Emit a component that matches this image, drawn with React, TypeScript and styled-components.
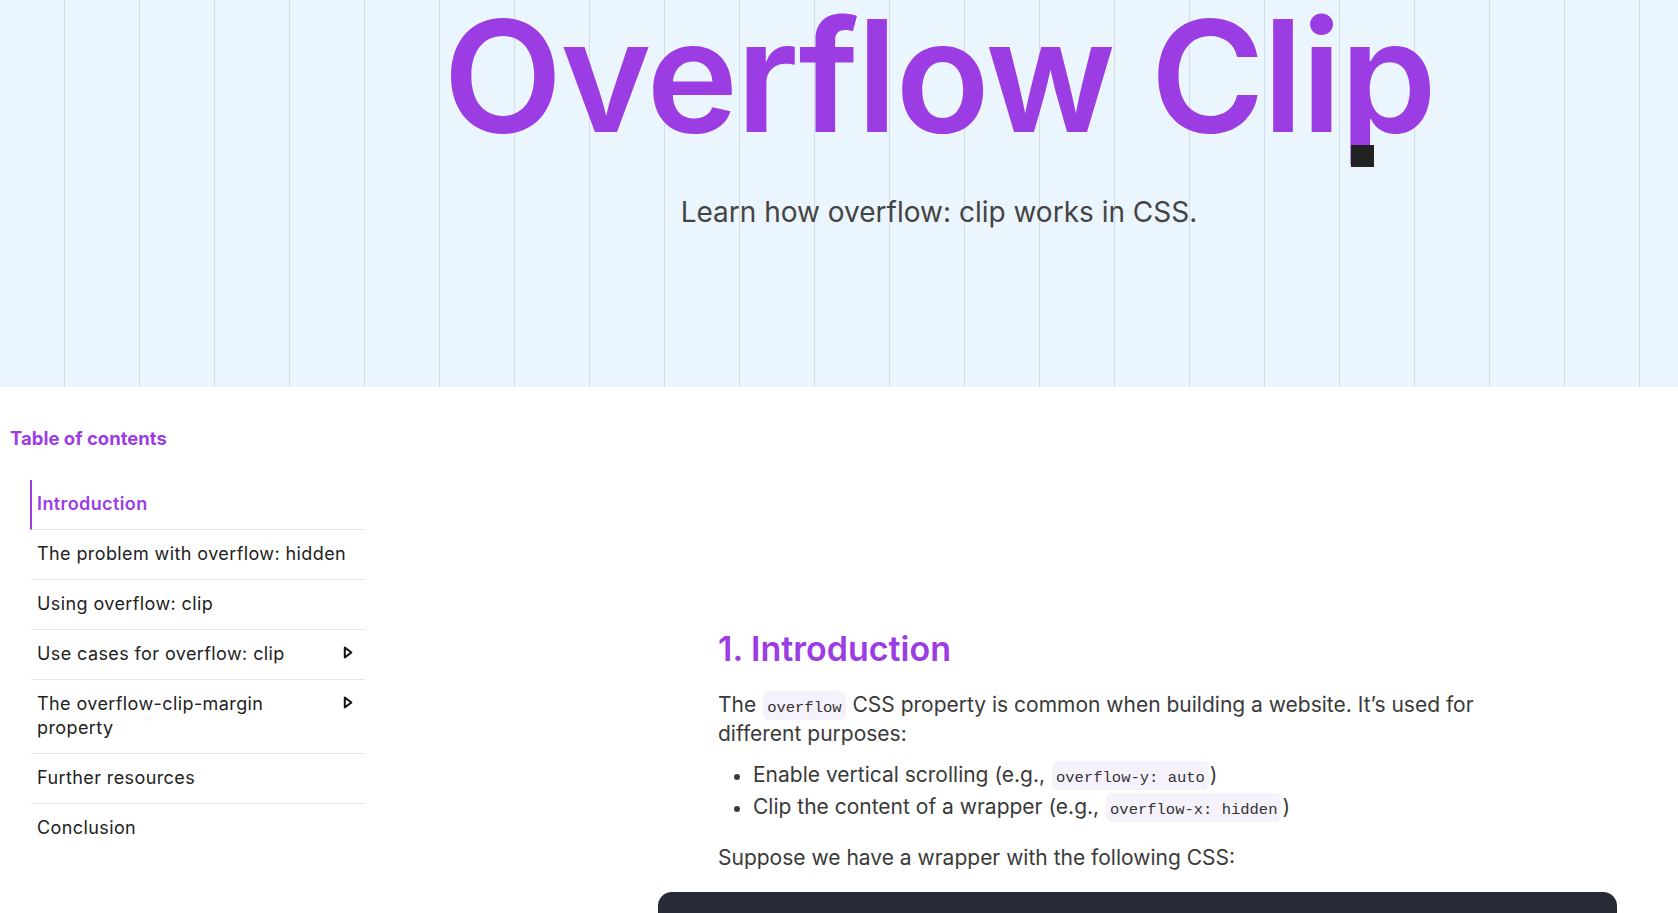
import React from "react";
import styled, { createGlobalStyle } from "styled-components";

const PURPLE = "#9b3de2";

const Global = createGlobalStyle`
  html, body { margin: 0; padding: 0; background: #ffffff; }
  body { font-family: Inter, "Noto Sans", sans-serif; color: #333; }
  * { box-sizing: border-box; }
`;

const Hero = styled.header`
  height: 387px;
  background-color: #ebf5fe;
  background-image: linear-gradient(to right, #d3dde7 1px, transparent 1px);
  background-size: 75px 100%;
  background-position: 64px 0;
  display: flex;
  flex-direction: column;
  align-items: center;
  padding-left: 200px;
`;

const Title = styled.h1`
  margin: 0;
  font-size: 155px;
  line-height: 0.98;
  font-weight: 600;
  letter-spacing: -2px;
  color: ${PURPLE};
  white-space: nowrap;
`;

const ClipLetter = styled.span`
  position: relative;
  &::after {
    content: "";
    position: absolute;
    left: 11px;
    top: 163px;
    width: 23px;
    height: 22px;
    background: #222222;
  }
`;

const Subtitle = styled.p`
  margin: 41px 0 0;
  font-size: 28px;
  line-height: 1.4;
  font-weight: 400;
  color: #444444;
`;

const Body = styled.div`
  display: grid;
  grid-template-columns: 365px 1fr;
  align-items: start;
`;

const Sidebar = styled.nav`
  padding: 40px 0 0 10px;
`;

const TocHeading = styled.h2`
  margin: 0;
  font-size: 18.5px;
  line-height: 23px;
  font-weight: 700;
  color: ${PURPLE};
`;

const TocList = styled.ul`
  list-style: none;
  margin: 30px 0 0 20px;
  padding: 0;
`;

const TocItem = styled.li<{ $active?: boolean; $last?: boolean }>`
  display: flex;
  align-items: flex-start;
  gap: 8px;
  padding: 12px 12px 13px 5px;
  border-left: 2px solid ${(p) => (p.$active ? PURPLE : "transparent")};
  border-bottom: 1px solid ${(p) => (p.$last ? "transparent" : "#e6e6e6")};
  font-size: 18px;
  line-height: 24px;
  letter-spacing: 0.4px;
  font-weight: ${(p) => (p.$active ? 600 : 400)};
  color: ${(p) => (p.$active ? PURPLE : "#222222")};
`;

const TocLabel = styled.span`
  flex: 1;
`;

const Arrow = styled.svg`
  flex: none;
  width: 10px;
  height: 13px;
  margin-top: 4px;
`;

const Main = styled.main`
  padding: 241px 0 0 353px;
`;

const Article = styled.article`
  width: 839px;
`;

const H2 = styled.h2`
  margin: 0;
  font-size: 34px;
  line-height: 42px;
  font-weight: 600;
  color: ${PURPLE};
`;

const Para = styled.p<{ $gap?: number }>`
  margin: ${(p) => p.$gap ?? 20}px 0 0;
  font-size: 21px;
  line-height: 29px;
  color: #3a3a3a;
`;

const List = styled.ul`
  margin: 12px 0 0;
  padding: 0 0 0 34px;
  font-size: 21px;
  line-height: 29px;
  color: #3a3a3a;
`;

const ListItem = styled.li`
  margin-bottom: 3px;
  padding-left: 1px;
  &::marker { font-size: 18px; }
`;

const Code = styled.code`
  font-family: "Liberation Mono", "DejaVu Sans Mono", monospace;
  font-size: 15.5px;
  line-height: 1;
  background: #f6f2fc;
  border-radius: 6px;
  padding: 8px 4px 3px;
  margin: 0 1px;
  color: #333;
`;

const CodeBlock = styled.pre`
  margin: 20px -60px 0;
  height: 220px;
  background: #282a36;
  border-radius: 14px;
`;

const toc = [
  { label: "Introduction", active: true },
  { label: "The problem with overflow: hidden" },
  { label: "Using overflow: clip" },
  { label: "Use cases for overflow: clip", arrow: true },
  { label: "The overflow-clip-margin property", arrow: true },
  { label: "Further resources" },
  { label: "Conclusion", last: true },
];

const ArrowIcon = () => (
  <Arrow viewBox="0 0 10 13" aria-hidden="true">
    <path d="M1.8 1.6 L8.4 6.5 L1.8 11.4 Z" fill="none" stroke="#111" strokeWidth="2" strokeLinejoin="round" />
  </Arrow>
);

export default function App() {
  return (
    <>
      <Global />
      <Hero>
        <Title>
          Overflow Cli<ClipLetter>p</ClipLetter>
        </Title>
        <Subtitle>Learn how overflow: clip works in CSS.</Subtitle>
      </Hero>
      <Body>
        <Sidebar>
          <TocHeading>Table of contents</TocHeading>
          <TocList>
            {toc.map((t) => (
              <TocItem key={t.label} $active={t.active} $last={t.last}>
                <TocLabel>{t.label}</TocLabel>
                {t.arrow && <ArrowIcon />}
              </TocItem>
            ))}
          </TocList>
        </Sidebar>
        <Main>
          <Article>
            <H2>1. Introduction</H2>
            <Para>
              The <Code>overflow</Code> CSS property is common when building a website. It’s used for different purposes:
            </Para>
            <List>
              <ListItem>
                Enable vertical scrolling (e.g., <Code>overflow-y: auto</Code>)
              </ListItem>
              <ListItem>
                Clip the content of a wrapper (e.g., <Code>overflow-x: hidden</Code>)
              </ListItem>
            </List>
            <Para $gap={22}>Suppose we have a wrapper with the following CSS:</Para>
            <CodeBlock />
          </Article>
        </Main>
      </Body>
    </>
  );
}
